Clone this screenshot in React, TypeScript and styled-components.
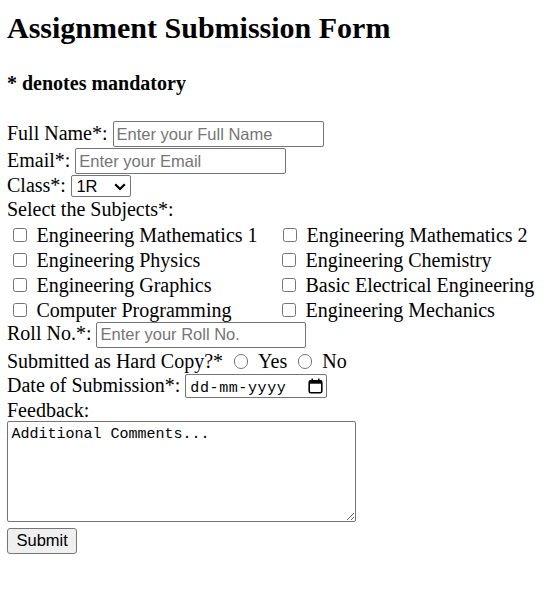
import React from "react";
import styled, { createGlobalStyle } from "styled-components";

const GlobalStyle = createGlobalStyle`
  html, body { margin: 0; padding: 0; background: #fff; }
  body {
    font-family: "Liberation Serif", "Times New Roman", serif;
    color: #000;
  }
`;

const Page = styled.div`
  padding: 0 7px;
`;

const Title = styled.h1`
  margin: 11px 0 0;
  font-size: 30px;
  line-height: 34px;
  font-weight: 700;
`;

const Note = styled.h4`
  margin: 26.5px 0 0;
  font-size: 20px;
  line-height: 23px;
  font-weight: 700;
`;

const Form = styled.form`
  margin-top: 26.5px;
  display: flex;
  flex-direction: column;
  align-items: flex-start;
`;

const Row = styled.div<{ $mt?: number; $align?: string; $h?: number }>`
  display: flex;
  align-items: ${(p) => p.$align ?? "baseline"};
  gap: 5px;
  margin-top: ${(p) => p.$mt ?? 0}px;
  ${(p) => (p.$h ? `height: ${p.$h}px;` : "")}
`;

const Label = styled.label`
  font-size: 20px;
  line-height: 23px;
  white-space: nowrap;
`;

const TextInput = styled.input<{ $w: number }>`
  box-sizing: border-box;
  width: ${(p) => p.$w}px;
  height: 26px;
  margin: 0;
  padding: 0 3px;
  border: 1px solid #767676;
  border-radius: 2px;
  background: #fff;
  color: #000;
  font-family: "Liberation Sans", Arial, sans-serif;
  font-size: 16.5px;
  outline: none;
  &::placeholder {
    color: #757575;
    opacity: 1;
  }
`;

const SelectWrap = styled.span`
  position: relative;
  display: inline-flex;
`;

const Select = styled.select`
  appearance: none;
  box-sizing: border-box;
  width: 60px;
  height: 22px;
  margin: 0;
  padding: 0 0 0 4.5px;
  border: 1px solid #767676;
  border-radius: 2px;
  background: #fff;
  color: #000;
  font-family: "Liberation Sans", Arial, sans-serif;
  font-size: 16.5px;
  outline: none;
`;

const Chevron = styled.svg`
  position: absolute;
  right: 5px;
  top: 8px;
  pointer-events: none;
`;

const SubjectGrid = styled.div`
  display: grid;
  grid-template-columns: 269px auto;
  grid-auto-rows: 25px;
  margin-top: 2px;
`;

const SubjectOption = styled.label<{ $shift?: number }>`
  display: flex;
  align-items: center;
  font-size: 20px;
  line-height: 23px;
  white-space: nowrap;
  padding-left: ${(p) => p.$shift ?? 0}px;
`;

const Checkbox = styled.input`
  appearance: none;
  flex: none;
  box-sizing: border-box;
  width: 14px;
  height: 14px;
  margin: 0 10px 0 5.5px;
  border: 1px solid #767676;
  border-radius: 2.5px;
  background: #fff;
`;

const RadioOption = styled.label`
  display: flex;
  align-items: center;
  gap: 5px;
  font-size: 20px;
  line-height: 23px;
`;

const Radio = styled.input`
  appearance: none;
  flex: none;
  box-sizing: border-box;
  width: 14.5px;
  height: 14.5px;
  margin: 0 5px 0 5.5px;
  border: 1px solid #767676;
  border-radius: 50%;
  background: #fff;
`;

const DateField = styled.div`
  display: inline-flex;
  align-items: center;
  box-sizing: border-box;
  width: 142px;
  height: 23.5px;
  padding: 0 3.5px 0 4px;
  border: 1px solid #767676;
  border-radius: 2px;
  background: #fff;
`;

const DateText = styled.span`
  padding-top: 4px;
  font-family: "Liberation Mono", "Courier New", monospace;
  font-size: 15px;
  line-height: 17px;
  letter-spacing: 0.6px;
  color: #000;
`;

const CalendarIcon = styled.svg`
  margin-left: auto;
  flex: none;
`;

const Comments = styled.textarea`
  box-sizing: border-box;
  width: 349px;
  height: 101px;
  margin: 1px 0 0;
  padding: 4px 3.5px;
  border: 1px solid #767676;
  border-radius: 2px;
  background: #fff;
  color: #000;
  font-family: "Liberation Mono", "Courier New", monospace;
  font-size: 15px;
  line-height: 17px;
  resize: both;
  outline: none;
`;

const SubmitButton = styled.button`
  box-sizing: border-box;
  margin-top: 6px;
  height: 26px;
  padding: 0 8.5px;
  border: 1px solid #767676;
  border-radius: 3px;
  background: #efefef;
  color: #000;
  font-family: "Liberation Sans", Arial, sans-serif;
  font-size: 16.5px;
`;

const subjects: [string, string][] = [
  ["Engineering Mathematics 1", "Engineering Mathematics 2"],
  ["Engineering Physics", "Engineering Chemistry"],
  ["Engineering Graphics", "Basic Electrical Engineering"],
  ["Computer Programming", "Engineering Mechanics"],
];

export default function App() {
  return (
    <Page>
      <GlobalStyle />
      <Title>Assignment Submission Form</Title>
      <Note>* denotes mandatory</Note>
      <Form onSubmit={(e) => e.preventDefault()}>
        <Row>
          <Label htmlFor="fullname">Full Name*:</Label>
          <TextInput id="fullname" $w={211} placeholder="Enter your Full Name" />
        </Row>
        <Row $mt={1}>
          <Label htmlFor="email">Email*:</Label>
          <TextInput id="email" $w={211} placeholder="Enter your Email" />
        </Row>
        <Row>
          <Label htmlFor="class">Class*:</Label>
          <SelectWrap>
            <Select id="class" defaultValue="1R">
              <option>1R</option>
              <option>1S</option>
              <option>1T</option>
            </Select>
            <Chevron width="12" height="8" viewBox="0 0 12 8">
              <path d="M1.2 1.2 L6 6 L10.8 1.2" fill="none" stroke="#000" strokeWidth="2.2" />
            </Chevron>
          </SelectWrap>
        </Row>
        <Row $mt={0.5}>
          <Label>Select the Subjects*:</Label>
        </Row>
        <SubjectGrid>
          {subjects.map(([a, b], i) => (
            <React.Fragment key={a}>
              <SubjectOption>
                <Checkbox type="checkbox" />
                {a}
              </SubjectOption>
              <SubjectOption $shift={i === 0 ? 1 : 0}>
                <Checkbox type="checkbox" />
                {b}
              </SubjectOption>
            </React.Fragment>
          ))}
        </SubjectGrid>
        <Row $mt={-1}>
          <Label htmlFor="roll">Roll No.*:</Label>
          <TextInput id="roll" $w={210} placeholder="Enter your Roll No." />
        </Row>
        <Row $mt={2.5} $align="center" $h={23}>
          <Label>Submitted as Hard Copy?*</Label>
          <RadioOption>
            <Radio type="radio" name="hardcopy" />
            Yes
          </RadioOption>
          <RadioOption>
            <Radio type="radio" name="hardcopy" />
            No
          </RadioOption>
        </Row>
        <Row $mt={0.5}>
          <Label>Date of Submission*:</Label>
          <DateField>
            <DateText>dd-mm-yyyy</DateText>
            <CalendarIcon width="15" height="16" viewBox="0 0 15 16">
              <rect x="1.2" y="2.7" width="12.6" height="12.1" rx="1.6" fill="none" stroke="#000" strokeWidth="1.6" />
              <rect x="1.2" y="2.7" width="12.6" height="3" fill="#000" />
              <rect x="3.4" y="0.6" width="1.6" height="3" fill="#000" />
              <rect x="10" y="0.6" width="1.6" height="3" fill="#000" />
            </CalendarIcon>
          </DateField>
        </Row>
        <Row $mt={1} $h={21}>
          <Label htmlFor="feedback">Feedback:</Label>
        </Row>
        <Comments id="feedback" defaultValue="Additional Comments..." />
        <SubmitButton type="submit">Submit</SubmitButton>
      </Form>
    </Page>
  );
}
